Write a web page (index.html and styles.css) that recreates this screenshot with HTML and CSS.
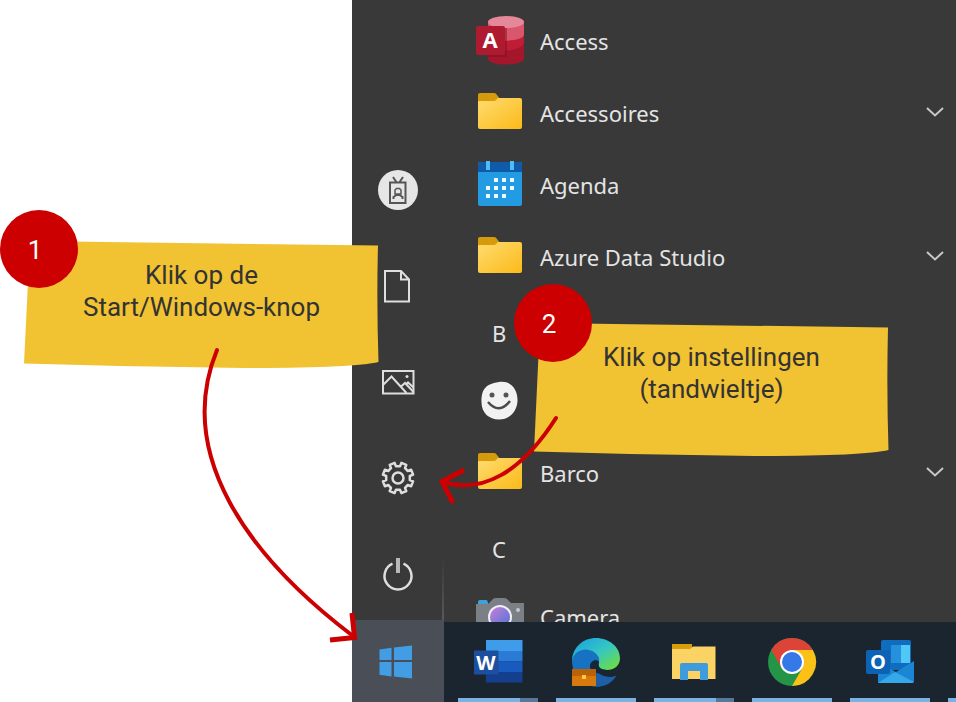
FILE: index.html
```html
<!DOCTYPE html>
<html lang="nl">
<head>
    <meta charset="UTF-8">
    <meta name="viewport" content="width=device-width, initial-scale=1.0">
    <title>Instellingen openen</title>
    <link rel="stylesheet" href="styles.css">
</head>
<body>
    <div class="guide">
        <div class="desktop">
            <div class="start-menu">
                <nav class="rail">
                    <button class="rail-btn" aria-label="Account">
                        <svg class="rail-icon" viewBox="0 0 40 40">
                            <circle cx="20" cy="20" r="20" fill="#e6e6e6"/>
                            <g fill="none" stroke="#555" stroke-width="2">
                                <path d="M12 12.500h15.500v20.500h-15.500zM15 7l4 6M25 7l-4 6"/>
                                <path d="M15.500 29v-2l3-2h3l3 2v2" stroke-width="2"/>
                                <path d="M17 24v-4l1.500-1.500h3L23 20v4z" stroke-width="1.500"/>
                            </g>
                        </svg>
                    </button>
                    <button class="rail-btn" aria-label="Documenten">
                        <svg class="rail-icon line" viewBox="0 0 40 40">
                            <path d="M7 5h16l8 8.500v22h-24zM23 5v8.500h8"/>
                        </svg>
                    </button>
                    <button class="rail-btn" aria-label="Afbeeldingen">
                        <svg class="rail-icon line" viewBox="0 0 40 40">
                            <path d="M5 9h30.500v22.500h-30.500z"/>
                            <path d="M5 23l8.500-8.500 15 16.500M22.500 25l4.500-4 8.500 9M28 22.500l2-2 5.500 5"/>
                            <circle cx="29" cy="14.500" r="1.500" fill="#dedede" stroke="none"/>
                        </svg>
                    </button>
                    <button class="rail-btn" aria-label="Instellingen">
                        <svg class="rail-icon line" viewBox="0 0 40 40">
                            <path stroke-width="2.500" stroke-linejoin="round" d="M22 8.200L23.400 4.900 28.300 6.900 27 10.200 29.800 13 33.100 11.700 35.100 16.600 31.800 18V22L35.100 23.400 33.100 28.300 29.800 27 27 29.800 28.300 33.100 23.400 35.100 22 31.800H18L16.600 35.100 11.700 33.100 13 29.800 10.200 27 6.900 28.300 4.900 23.400 8.200 22V18L4.900 16.600 6.900 11.700 10.200 13 13 10.200 11.700 6.900 16.600 4.900 18 8.200z"/>
                            <circle cx="20" cy="20" r="5.500" stroke-width="2.500"/>
                        </svg>
                    </button>
                    <button class="rail-btn" aria-label="Aan/uit">
                        <svg class="rail-icon line" viewBox="0 0 40 40">
                            <path d="M14.500 9.700a13.500 13.500 0 1 0 11 0" stroke-width="2.500"/>
                            <path d="M20 4v15" stroke="#b8b8b8" stroke-width="4"/>
                        </svg>
                    </button>
                </nav>

                <div class="apps">
                    <button class="app">
                        <svg class="app-icon" viewBox="0 0 48 48">
                            <path d="M12 4.500v37c0 8 36 8 36 0v-37z" fill="#a4162a"/>
                            <path d="M12 4.500v28c8 4 36 1 36-7v-21z" fill="#bf1d35"/>
                            <path d="M12 4.500v16c8 5 36 4 36-3v-13z" fill="#d9566d"/>
                            <ellipse cx="30" cy="5" rx="18" ry="6" fill="#e5899a"/>
                            <path d="M12 11h19v29h-19z" fill="#7d1020" opacity=".5"/>
                            <rect y="9" width="29" height="29" rx="2" fill="#ae1a30"/>
                            <text class="letter" x="14" y="31" font-size="22">A</text>
                        </svg>
                        <span class="app-name">Access</span>
                    </button>
                    <button class="app">
                        <svg class="app-icon" viewBox="0 0 48 48"><use href="#folder"/></svg>
                        <span class="app-name">Accessoires</span>
                        <svg class="chevron" viewBox="0 0 18 12"><path d="M1 1l8 7.500L17 1"/></svg>
                    </button>
                    <button class="app">
                        <svg class="app-icon" viewBox="0 0 48 48">
                            <rect x="2" y="1" width="44" height="44" rx="2" fill="#229be3"/>
                            <path d="M2 11v-8q0-2 2-2h40q2 0 2 2v8z" fill="#0f5ba9"/>
                            <path d="M10 0h4v9h-4zM34 0h4v9h-4z" fill="#4fbdf2"/>
                            <path d="M18 17h4v4h-4zM26 17h4v4h-4zM34 17h4v4h-4zM10 25h4v4h-4zM18 25h4v4h-4zM26 25h4v4h-4zM34 25h4v4h-4zM10 33h4v4h-4zM18 33h4v4h-4zM26 33h4v4h-4z" fill="#eef8fe"/>
                        </svg>
                        <span class="app-name">Agenda</span>
                    </button>
                    <button class="app">
                        <svg class="app-icon" viewBox="0 0 48 48"><use href="#folder"/></svg>
                        <span class="app-name">Azure Data Studio</span>
                        <svg class="chevron" viewBox="0 0 18 12"><path d="M1 1l8 7.500L17 1"/></svg>
                    </button>
                    <h2 class="app-letter">B</h2>
                    <button class="app" aria-label="App">
                        <svg class="app-icon" viewBox="0 0 48 48">
                            <path d="M23 5C35 3 42 13 41.500 24S33 42.500 23 42.500 5.500 36 5.500 25 8 7 23 5z" fill="#f2f2f2"/>
                            <circle cx="16" cy="18" r="2.500" fill="#555"/>
                            <circle cx="30" cy="18" r="2.500" fill="#555"/>
                            <path d="M12 25q11 13 22-1" fill="none" stroke="#4a4a4a" stroke-width="2.500"/>
                        </svg>
                    </button>
                    <button class="app">
                        <svg class="app-icon" viewBox="0 0 48 48"><use href="#folder"/></svg>
                        <span class="app-name">Barco</span>
                        <svg class="chevron" viewBox="0 0 18 12"><path d="M1 1l8 7.500L17 1"/></svg>
                    </button>
                    <h2 class="app-letter">C</h2>
                    <button class="app">
                        <svg class="app-icon" viewBox="0 0 48 48">
                            <path d="M0 11h12l5-5q1-1 3-1h8q2 0 3 1l4 4h13v34h-48z" fill="#7b8086"/>
                            <path d="M2 11v-2q0-2 2-2h6q2 0 2 4z" fill="#3ba3d8"/>
                            <circle cx="42" cy="17" r="2" fill="#c4c8cc"/>
                            <circle cx="24" cy="24" r="12" fill="#f0eef5"/>
                            <circle cx="24" cy="24" r="10" fill="url(#lens)"/>
                        </svg>
                        <span class="app-name">Camera</span>
                    </button>
                </div>
            </div>

            <div class="taskbar">
                <button class="start-btn" aria-label="Start">
                    <svg class="rail-icon" viewBox="0 0 40 40" fill="#429de5">
                        <path d="M1.500 8.500l12-1.700V19h-12zM16 6.500l18-2V19H16zM1.500 21h12v14.500l-12-1.700zM16 21h18v16.500L16 35.500z"/>
                    </svg>
                </button>
                <div class="tasks">
                    <button class="task stacked" aria-label="Word">
                        <svg class="app-icon" viewBox="0 0 48 48">
                            <path d="M12 2h36.500v11H12z" fill="#3f9ceb"/>
                            <path d="M12 13h36.500v10.500H12z" fill="#2a7bd6"/>
                            <path d="M12 23.500h36.500V34H12z" fill="#185abd"/>
                            <path d="M12 34h36.500v10.500H12z" fill="#133f8e"/>
                            <rect y="12.500" width="24.500" height="24" rx="1" fill="#1d4f9f"/>
                            <text class="letter" x="12" y="32" font-size="20">W</text>
                        </svg>
                    </button>
                    <button class="task" aria-label="Edge">
                        <svg class="app-icon" viewBox="0 0 48 48">
                            <path d="M0 22C1 9 11 0 24 0s24 9 24 20c0 8-6 12-13 12-6 0-10-3-8-8-3-8-17-10-27-2z" fill="url(#edge)"/>
                            <path d="M0 22C3 11 15 9 22 14c4 3 6 6 5 10-5-4-9 1-8 7 3 10 14 11 25 7-5 8-12 10.500-20 10.500C10 48.500 0 38 0 22z" fill="#1773c2"/>
                            <path d="M24 33c6 6 13 7 20 5-5 8-12 10.500-20 10.500z" fill="#1c5fa8"/>
                            <path d="M18 27c1-5 7-6 9-3-2 5 2 8 8 8-4 5-18 5-17-5z" fill="#152638"/>
                            <path d="M0 31h24v17H0z" fill="#d7790d"/>
                            <path d="M0 31h24v7H0z" fill="#b96208"/>
                            <path d="M10 37h4v4h-4z" fill="#ffca45"/>
                        </svg>
                    </button>
                    <button class="task stacked" aria-label="Verkenner">
                        <svg class="app-icon" viewBox="0 0 48 48">
                            <path d="M2 6h20v8H2z" fill="#d99d0c"/>
                            <path d="M2 11h18l3-2.500h22.500V41H2z" fill="#fbd264"/>
                            <path d="M10 42V27q0-2 2-2h24q2 0 2 2v15h-8v-9H18v9z" fill="#3e9bdc"/>
                        </svg>
                    </button>
                    <button class="task" aria-label="Chrome">
                        <svg class="app-icon" viewBox="0 0 48 48">
                            <circle cx="24" cy="24" r="24" fill="#249447"/>
                            <path d="M3.200 12a24 24 0 0 1 41.600 0H24L13.600 30z" fill="#db4437"/>
                            <path d="M44.800 12A24 24 0 0 1 24 48l10.400-18L24 12z" fill="#fbc116"/>
                            <circle cx="24" cy="24" r="12" fill="#fff"/>
                            <circle cx="24" cy="24" r="10" fill="#3578e8"/>
                        </svg>
                    </button>
                    <button class="task" aria-label="Outlook">
                        <svg class="app-icon" viewBox="0 0 48 48">
                            <path d="M15 4q0-2 2-2h26q2 0 2 2v28H15z" fill="#0f6cbf"/>
                            <path d="M25 7h10v9H25zM25 16h10v9H25z" fill="#2490de"/>
                            <path d="M35 7h9v18h-9z" fill="#50c8f5"/>
                            <path d="M12 24l18 10 18-11v20q0 2-2 2H12z" fill="#1b86d3"/>
                            <path d="M12 45l17-11 19 10-2 1z" fill="#35a8ea"/>
                            <rect y="12" width="24" height="24" rx="2" fill="#0c63b5"/>
                            <text class="letter" x="12" y="31" font-size="20">O</text>
                        </svg>
                    </button>
                    <button class="task" aria-label="App"></button>
                </div>
            </div>
        </div>

        <!-- step 1 -->
        <div class="note note-start">
            <svg class="note-paper" viewBox="0 0 355 127" preserveAspectRatio="none">
                <path d="M6 0L354 4.500Q352.500 60 354.500 121 330 127 220 127 110 126 0 122.500z"/>
            </svg>
            <p class="note-text">Klik op de<br>Start/Windows-knop</p>
            <span class="badge">1</span>
        </div>

        <!-- step 2 -->
        <div class="note note-settings">
            <svg class="note-paper" viewBox="0 0 355 133" preserveAspectRatio="none">
                <path d="M6 0L354 4.500Q352.500 66 354.500 127 330 133 220 133 110 132 0 128.500z"/>
            </svg>
            <p class="note-text">Klik op instellingen<br>(tandwieltje)</p>
            <span class="badge">2</span>
        </div>

        <svg class="arrows">
            <path class="shaft" d="M217 350C174 455 249 557 353 636"/>
            <path class="head" d="M352 613L354.500 637.500 330 640"/>
            <path class="shaft" d="M556 418C521 473 482 494 443 482"/>
            <path class="head" d="M464 470L442 481.500 453 503"/>
        </svg>
    </div>

    <!-- shared shapes -->
    <svg class="defs" width="0" height="0">
        <defs>
            <linearGradient id="gold" x1="0" y1="0" x2="1" y2="1">
                <stop offset="0" stop-color="#ffdc70"/>
                <stop offset="1" stop-color="#fbba19"/>
            </linearGradient>
            <linearGradient id="lens" x1="0" y1="0" x2="1" y2="1">
                <stop offset="0" stop-color="#c77fd8"/>
                <stop offset="1" stop-color="#4f74d8"/>
            </linearGradient>
            <linearGradient id="edge" x1="0" y1="0" x2="1" y2="1">
                <stop offset="0.1" stop-color="#1fa5df"/>
                <stop offset="0.5" stop-color="#35c6c4"/>
                <stop offset="0.9" stop-color="#6bdc48"/>
            </linearGradient>
            <g id="folder">
                <path d="M2 14V6q0-2 2-2h14q2 0 3 2l3 4v6H2z" fill="#d69a0a"/>
                <path d="M2 13q0-1 1-1h15q2 0 3-2l1-1h22q2 0 2 2v27q0 2-2 2H4q-2 0-2-2z" fill="url(#gold)"/>
            </g>
        </defs>
    </svg>
</body>
</html>
```

FILE: styles.css
```css
* {
    box-sizing: border-box;
}
body {
    margin: 0;
    background-color: #fff;
    font-family: Roboto, "Liberation Sans", sans-serif;
}
button {
    margin: 0;
    padding: 0;
    border: 0;
    background: none;
    color: inherit;
    font: inherit;
    text-align: left;
    cursor: pointer;
}
svg {
    display: block;
    overflow: visible;
}
.guide {
    position: relative;
    height: 100vh;
    padding-left: 352px;
    overflow: hidden;
}
.desktop {
    display: flex;
    flex-direction: column;
    height: 100%;
    background-color: #393939;
    color: #e4e4e4;
    font-family: "Noto Sans", "Open Sans", sans-serif;
}

/* start menu */
.start-menu {
    display: flex;
    flex: 1;
    min-height: 0;
    overflow: hidden;
}
.rail {
    display: flex;
    flex-direction: column;
    justify-content: flex-end;
    width: 92px;
    background: linear-gradient(#393939, #5a5a5a) right bottom / 2px 64px no-repeat;
}
.rail-btn {
    display: grid;
    place-items: center;
    flex: none;
    height: 96px;
}
.rail-icon {
    width: 40px;
    height: 40px;
}
.line {
    fill: none;
    stroke: #dedede;
    stroke-width: 2;
}
.apps {
    flex: 1;
    padding: 5px 12px 0 32px;
}
.app {
    display: flex;
    align-items: center;
    gap: 16px;
    width: 100%;
    height: 72px;
}
.app-icon {
    flex: none;
    width: 48px;
    height: 48px;
}
.app-name {
    flex: 1;
    font-size: 22px;
    line-height: 32px;
}
.app-letter {
    height: 72px;
    margin: 0;
    padding: 4px 0 0 16px;
    font-size: 22px;
    font-weight: 400;
    line-height: 72px;
}
.chevron {
    width: 18px;
    height: 12px;
    fill: none;
    stroke: #c8c8c8;
    stroke-width: 2;
}
.letter {
    fill: #fff;
    font-family: "Open Sans", sans-serif;
    font-weight: 700;
    text-anchor: middle;
}

/* taskbar */
.taskbar {
    display: flex;
    flex: none;
    height: 80px;
    background-color: #1b2530;
}
.start-btn {
    display: grid;
    place-items: center;
    flex: none;
    width: 92px;
    height: 82px;
    margin-top: -2px;
    background-color: #4a4f57;
}
.tasks {
    display: flex;
    flex: 1;
    gap: 18px;
    min-width: 0;
    padding-left: 14px;
    overflow: hidden;
}
.task {
    display: grid;
    place-items: center;
    flex: none;
    width: 80px;
    height: 80px;
    background: linear-gradient(#79b3e3, #79b3e3) left bottom / 100% 4px no-repeat;
}
.task.stacked {
    background-image: linear-gradient(90deg, #79b3e3 62px, #56799a 62px);
}

/* notes */
.note {
    position: absolute;
    width: 355px;
    padding-top: 18px;
    color: #333;
    text-align: center;
}
.note-start {
    top: 241px;
    left: 24px;
    height: 127px;
}
.note-settings {
    top: 323px;
    left: 534px;
    height: 133px;
}
.note-paper {
    position: absolute;
    inset: 0;
    width: 100%;
    height: 100%;
    fill: #f1c232;
}
.note-text {
    position: relative;
    margin: 0;
    font-size: 26px;
    line-height: 32px;
}
.badge {
    position: absolute;
    top: -31px;
    left: -24px;
    width: 78px;
    height: 78px;
    padding-right: 8px;
    border-radius: 50%;
    background-color: #c00;
    color: #fff;
    font-size: 26px;
    line-height: 80px;
}
.note-settings .badge {
    top: -39px;
    left: -20px;
}
.arrows {
    position: absolute;
    inset: 0;
    width: 100%;
    height: 100%;
    fill: none;
    stroke: #c00;
    pointer-events: none;
}
.shaft {
    stroke-width: 4;
    stroke-linecap: round;
}
.head {
    stroke-width: 5;
}
.defs {
    position: absolute;
}
```
